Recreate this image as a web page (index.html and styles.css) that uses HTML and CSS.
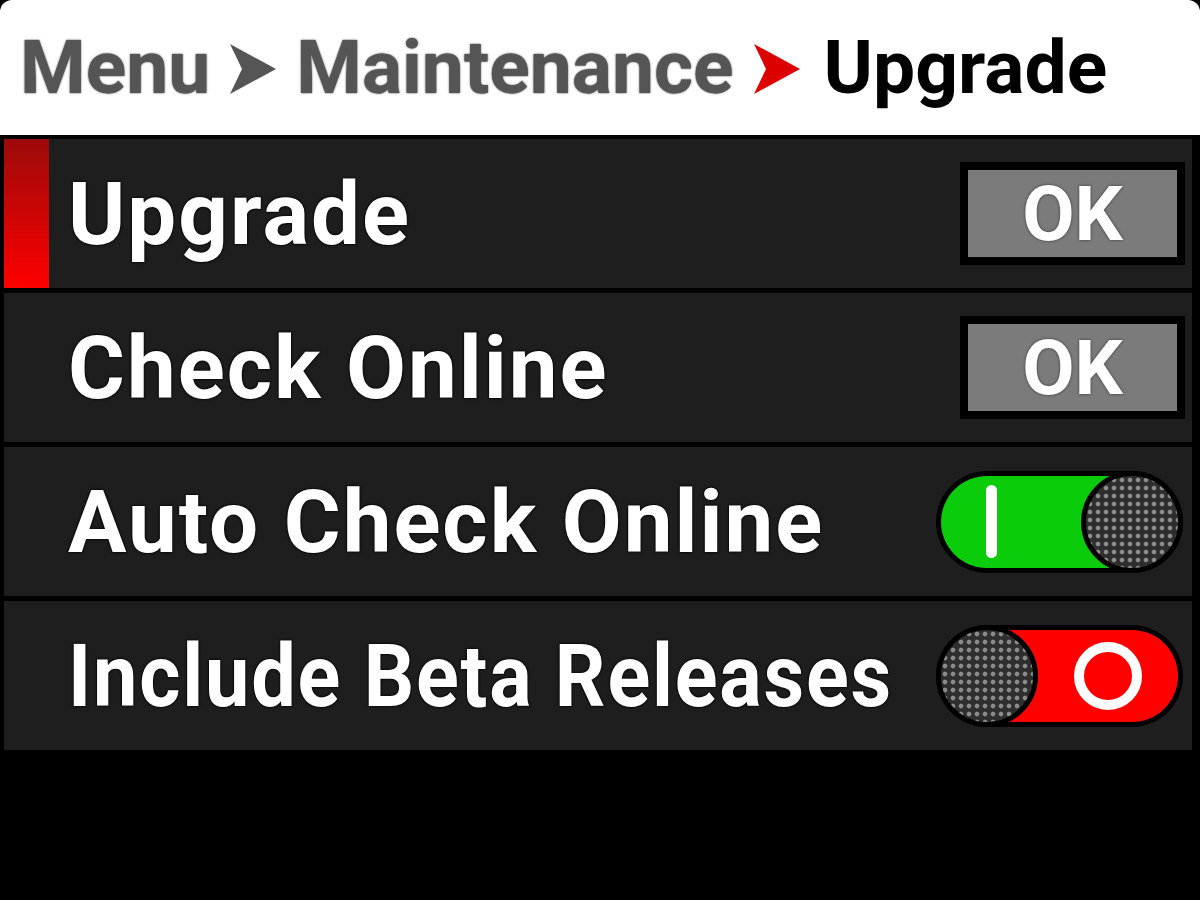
FILE: index.html
```html
<!DOCTYPE html>
<html lang="en">
    <head>
        <meta charset="UTF-8">
        <meta name="viewport" content="width=device-width, initial-scale=1.0">
        <title>Upgrade</title>
        <link rel="stylesheet" href="styles.css">
    </head>
<body>
    <div class="screen">
        <!-- Breadcrumb -->
        <header class="crumbs">
            <span class="crumb">Menu</span>
            <svg class="crumb-arrow" viewBox="0 0 46 50"><polygon points="0,0 46,25 0,50 12,25"/></svg>
            <span class="crumb">Maintenance</span>
            <svg class="crumb-arrow current" viewBox="0 0 46 50"><polygon points="0,0 46,25 0,50 12,25"/></svg>
            <span class="crumb current">Upgrade</span>
        </header>

        <div class="menu-list">
            <div class="menu-row selected">
                <span class="marker"></span>
                <span class="label">Upgrade</span>
                <button class="ok-button"><span>OK</span></button>
            </div>

            <div class="menu-row">
                <span class="marker"></span>
                <span class="label">Check Online</span>
                <button class="ok-button"><span>OK</span></button>
            </div>

            <div class="menu-row">
                <span class="marker"></span>
                <span class="label">Auto Check Online</span>
                <div class="toggle on">
                    <div class="track"><span class="bar"></span></div>
                    <span class="knob"></span>
                </div>
            </div>

            <div class="menu-row">
                <span class="marker"></span>
                <span class="label"><span class="squeeze">Include Beta Releases</span></span>
                <div class="toggle off">
                    <div class="track"><span class="ring"></span></div>
                    <span class="knob"></span>
                </div>
            </div>
        </div>
    </div>
</body>
</html>
```

FILE: styles.css
```css
:root {
    --row-color: #1e1e1e;
    --crumb-color: #555555;
    --red: #ff0000;
    --green: #0bcc0b;
    --button-gray: #7b7b7b;
}

html, body {
    margin: 0;
    padding: 0;
    background-color: #000;
}

body {
    font-family: Roboto, "Liberation Sans", sans-serif;
    font-weight: bold;
}

.screen {
    width: 1200px;
    height: 900px;
    background-color: #000;
    overflow: hidden;
}

.crumbs {
    height: 135px;
    background-color: #fff;
    border-radius: 12px 12px 0 0;
    display: flex;
    align-items: center;
    gap: 20px;
    padding: 0 0 0 20px;
    box-sizing: border-box;
    font-size: 75px;
    color: var(--crumb-color);
}

.crumb {
    text-shadow: 0 0 2px #333;
    line-height: 1;
}

.crumb.current {
    color: #000;
    text-shadow: none;
    margin-left: 4px;
}

.crumb-arrow {
    width: 46px;
    height: 50px;
    fill: var(--crumb-color);
    margin-top: 2px;
}

.crumb-arrow.current {
    fill: #dd0000;
}

.menu-list {
    display: flex;
    flex-direction: column;
    gap: 5px;
    padding: 4px 8px 0 4px;
}

.menu-row {
    height: 149px;
    background-color: var(--row-color);
    display: flex;
    align-items: center;
    padding-right: 7px;
}

.marker {
    width: 45px;
    flex-shrink: 0;
    align-self: stretch;
}

.menu-row.selected .marker {
    background: linear-gradient(to bottom, #9c0a0a, #ff0000);
}

.label {
    flex: 1;
    min-width: 0;
    margin-left: 19px;
    font-size: 87px;
    letter-spacing: 2px;
    color: #fff;
    white-space: nowrap;
    text-shadow: 0 0 3px #000, 0 0 2px #000;
}

/* long labels get squeezed to fit before the toggle */
.squeeze {
    display: inline-block;
    transform: scaleX(0.91);
    transform-origin: left center;
}

.ok-button {
    flex-shrink: 0;
    width: 225px;
    height: 103px;
    background-color: #000;
    border: none;
    padding: 8px;
    margin: 0;
    box-sizing: border-box;
    cursor: pointer;
}

.ok-button span {
    display: flex;
    align-items: center;
    justify-content: center;
    height: 100%;
    background-color: var(--button-gray);
    font-family: Roboto, "Liberation Sans", sans-serif;
    font-weight: bold;
    font-size: 76px;
    color: #fff;
    text-shadow: 0 0 3px #333;
}

.toggle {
    flex-shrink: 0;
    position: relative;
    width: 247px;
    height: 102px;
    background-color: #000;
    border-radius: 51px;
    padding: 5px;
    box-sizing: border-box;
    margin-right: 2px;
}

.track {
    height: 100%;
    border-radius: 46px;
    display: flex;
    align-items: center;
}

.toggle.on .track {
    background-color: var(--green);
}

.toggle.off .track {
    background-color: var(--red);
    justify-content: center;
    padding-left: 96px;
}

.bar {
    width: 11px;
    height: 73px;
    background-color: #fff;
    border-radius: 6px;
    margin-left: 45px;
}

.ring {
    width: 68px;
    height: 68px;
    border: 10px solid #fff;
    border-radius: 50%;
    box-sizing: border-box;
}

.knob {
    position: absolute;
    top: 0;
    width: 102px;
    height: 102px;
    border: 5px solid #000;
    border-radius: 50%;
    box-sizing: border-box;
    background-color: #2e2e2e;
    background-image: radial-gradient(circle, #8c8c8c 1.8px, transparent 2.8px);
    background-size: 8px 8px;
}

.toggle.on .knob {
    right: 0;
}

.toggle.off .knob {
    left: 0;
}
```
